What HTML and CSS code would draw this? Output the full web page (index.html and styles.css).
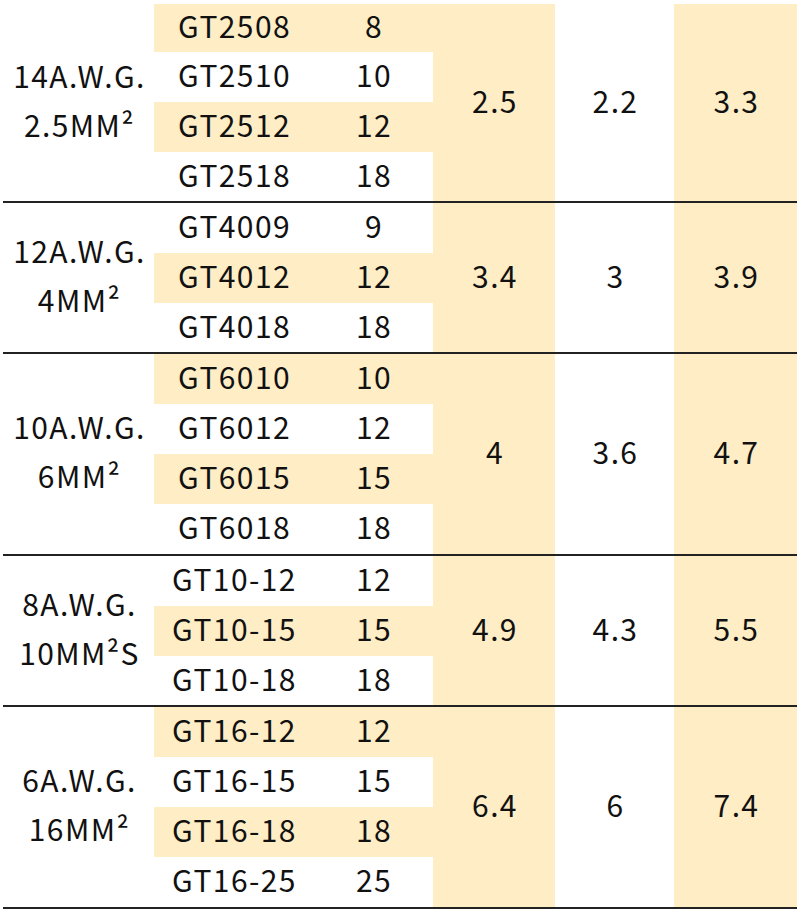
FILE: index.html
```html
<!DOCTYPE html>
<html>
<head>
<meta charset="utf-8">
<link rel="stylesheet" href="styles.css">
</head>
<body>
<div class="table">
  <div class="group g4 first">
    <div class="label">14A.W.G.<br>2.5MM²</div>
    <div class="v v1 y">2.5</div>
    <div class="v v2">2.2</div>
    <div class="v v3 y">3.3</div>
    <div class="c hl">GT2508</div><div class="n hl">8</div>
    <div class="c">GT2510</div><div class="n">10</div>
    <div class="c hl">GT2512</div><div class="n hl">12</div>
    <div class="c">GT2518</div><div class="n">18</div>
  </div>
  <div class="group g3">
    <div class="label">12A.W.G.<br>4MM²</div>
    <div class="v v1 y">3.4</div>
    <div class="v v2">3</div>
    <div class="v v3 y">3.9</div>
    <div class="c">GT4009</div><div class="n">9</div>
    <div class="c hl">GT4012</div><div class="n hl">12</div>
    <div class="c">GT4018</div><div class="n">18</div>
  </div>
  <div class="group g4">
    <div class="label">10A.W.G.<br>6MM²</div>
    <div class="v v1 y">4</div>
    <div class="v v2">3.6</div>
    <div class="v v3 y">4.7</div>
    <div class="c hl">GT6010</div><div class="n hl">10</div>
    <div class="c">GT6012</div><div class="n">12</div>
    <div class="c hl">GT6015</div><div class="n hl">15</div>
    <div class="c">GT6018</div><div class="n">18</div>
  </div>
  <div class="group g3">
    <div class="label">8A.W.G.<br>10MM²S</div>
    <div class="v v1 y">4.9</div>
    <div class="v v2">4.3</div>
    <div class="v v3 y">5.5</div>
    <div class="c">GT10-12</div><div class="n">12</div>
    <div class="c hl">GT10-15</div><div class="n hl">15</div>
    <div class="c">GT10-18</div><div class="n">18</div>
  </div>
  <div class="group g4">
    <div class="label">6A.W.G.<br>16MM²</div>
    <div class="v v1 y">6.4</div>
    <div class="v v2">6</div>
    <div class="v v3 y">7.4</div>
    <div class="c hl">GT16-12</div><div class="n hl">12</div>
    <div class="c">GT16-15</div><div class="n">15</div>
    <div class="c hl">GT16-18</div><div class="n hl">18</div>
    <div class="c">GT16-25</div><div class="n">25</div>
  </div>
</div>
</body>
</html>
```
FILE: styles.css
```css
html, body {
  margin: 0;
  padding: 0;
  background: #ffffff;
}
body {
  font-family: "Noto Sans CJK SC", "Noto Sans", sans-serif;
  font-size: 30px;
  letter-spacing: 1.4px;
  color: #111111;
}
.table {
  width: 794px;
  padding: 4px 3px 0 3px;
}
.group {
  display: grid;
  grid-template-columns: 151px 159px 120px 122px 119px 123px;
  border-bottom: 2px solid #222222;
}
.g4 { grid-template-rows: 50px 50px 50px 50px; }
.g3 { grid-template-rows: 50px 50px 49px; }
.g4.first { grid-template-rows: 48px 50px 50px 49px; }
.label {
  grid-column: 1;
  grid-row: 1 / -1;
  display: flex;
  align-items: center;
  justify-content: center;
  text-align: center;
  line-height: 49px;
  padding: 0 0 6px 2px;
}
.v {
  grid-row: 1 / -1;
  display: flex;
  align-items: center;
  justify-content: center;
  padding: 0 0 6px 2px;
}
.v1 { grid-column: 4; }
.v2 { grid-column: 5; }
.v3 { grid-column: 6; }
.y, .hl { background: #feedc5; }
.c, .n {
  display: flex;
  align-items: center;
  justify-content: center;
  padding: 0 0 6px 2px;
}
```
